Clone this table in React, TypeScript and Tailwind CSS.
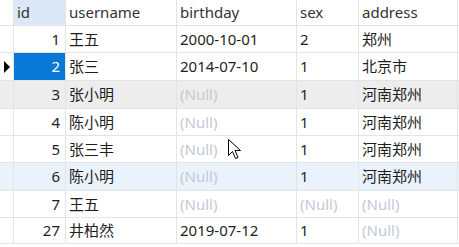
import React from 'react'

type Row = {
  id: string
  username: string
  birthday: string | null
  sex: string | null
  address: string | null
}

const rows: Row[] = [
  { id: '1', username: '王五', birthday: '2000-10-01', sex: '2', address: '郑州' },
  { id: '2', username: '张三', birthday: '2014-07-10', sex: '1', address: '北京市' },
  { id: '3', username: '张小明', birthday: null, sex: '1', address: '河南郑州' },
  { id: '4', username: '陈小明', birthday: null, sex: '1', address: '河南郑州' },
  { id: '5', username: '张三丰', birthday: null, sex: '1', address: '河南郑州' },
  { id: '6', username: '陈小明', birthday: null, sex: '1', address: '河南郑州' },
  { id: '7', username: '王五', birthday: null, sex: null, address: null },
  { id: '27', username: '井柏然', birthday: '2019-07-12', sex: '1', address: null },
]

const heights = ['h-[27px]', 'h-[28px]', 'h-[28px]', 'h-[27px]', 'h-[27px]', 'h-[28px]', 'h-[27px]', 'h-[26px]']

const Cell = ({ value, className }: { value: string | null; className: string }) => (
  <div className={`flex items-center border-r border-[#e4e4e4] ${className}`}>
    {value === null ? <span className="text-[#c3cad6]">(Null)</span> : value}
  </div>
)

const App = () => {
  return (
    <div
      className="relative w-[459px] h-[247px] bg-white overflow-hidden text-[15px] text-[#1e1e1e]"
      style={{ fontFamily: '"Noto Sans", "Noto Sans CJK SC", sans-serif' }}
    >
      <div className="flex h-[26px] border-b border-[#e4e4e4] text-[#333]">
        <div className="w-[14px] border-r border-[#e4e4e4]" />
        <div className="w-[52px] pl-[3px] flex items-center border-r border-[#e4e4e4] bg-[#dae8f7]">id</div>
        <div className="w-[111px] pl-[3px] flex items-center border-r border-[#e4e4e4]">username</div>
        <div className="w-[120px] pl-[3px] flex items-center border-r border-[#e4e4e4]">birthday</div>
        <div className="w-[62px] pl-[3px] flex items-center border-r border-[#e4e4e4]">sex</div>
        <div className="w-[99px] pl-[3px] flex items-center border-r border-[#e4e4e4]">address</div>
      </div>
      {rows.map((r, i) => (
        <div
          key={r.id}
          className={`flex border-b border-[#e4e4e4] ${heights[i]} ${
            i === 2 ? 'bg-[#ededed]' : i === 5 ? 'bg-[#eaf2fc]' : ''
          }`}
        >
          <div className="w-[14px] flex items-center justify-center border-r border-[#e4e4e4]">
            {i === 1 && (
              <svg width="8" height="12" viewBox="0 0 8 12">
                <path d="M1 0 L7 6 L1 12 Z" fill="#000" />
              </svg>
            )}
          </div>
          <div
            className={`w-[52px] flex items-center justify-end pr-[5px] border-r border-[#e4e4e4] ${
              i === 1 ? 'bg-[#0a78d7] text-white' : ''
            }`}
          >
            {r.id}
          </div>
          <Cell value={r.username} className="w-[111px] pl-[3px]" />
          <Cell value={r.birthday} className="w-[120px] pl-[3px]" />
          <Cell value={r.sex} className="w-[62px] pl-[3px]" />
          <Cell value={r.address} className="w-[99px] pl-[3px]" />
        </div>
      ))}
      <svg className="absolute left-[228px] top-[139px]" width="17" height="22" viewBox="0 0 17 22">
        <path
          d="M0.5 0.5 L0.5 16.5 L4.5 12.5 L7.5 19.5 L10 18.5 L7 11.5 L12.5 11.5 Z"
          fill="#fff"
          stroke="#000"
          strokeWidth="1"
          strokeLinejoin="miter"
        />
      </svg>
    </div>
  )
}

export default App
